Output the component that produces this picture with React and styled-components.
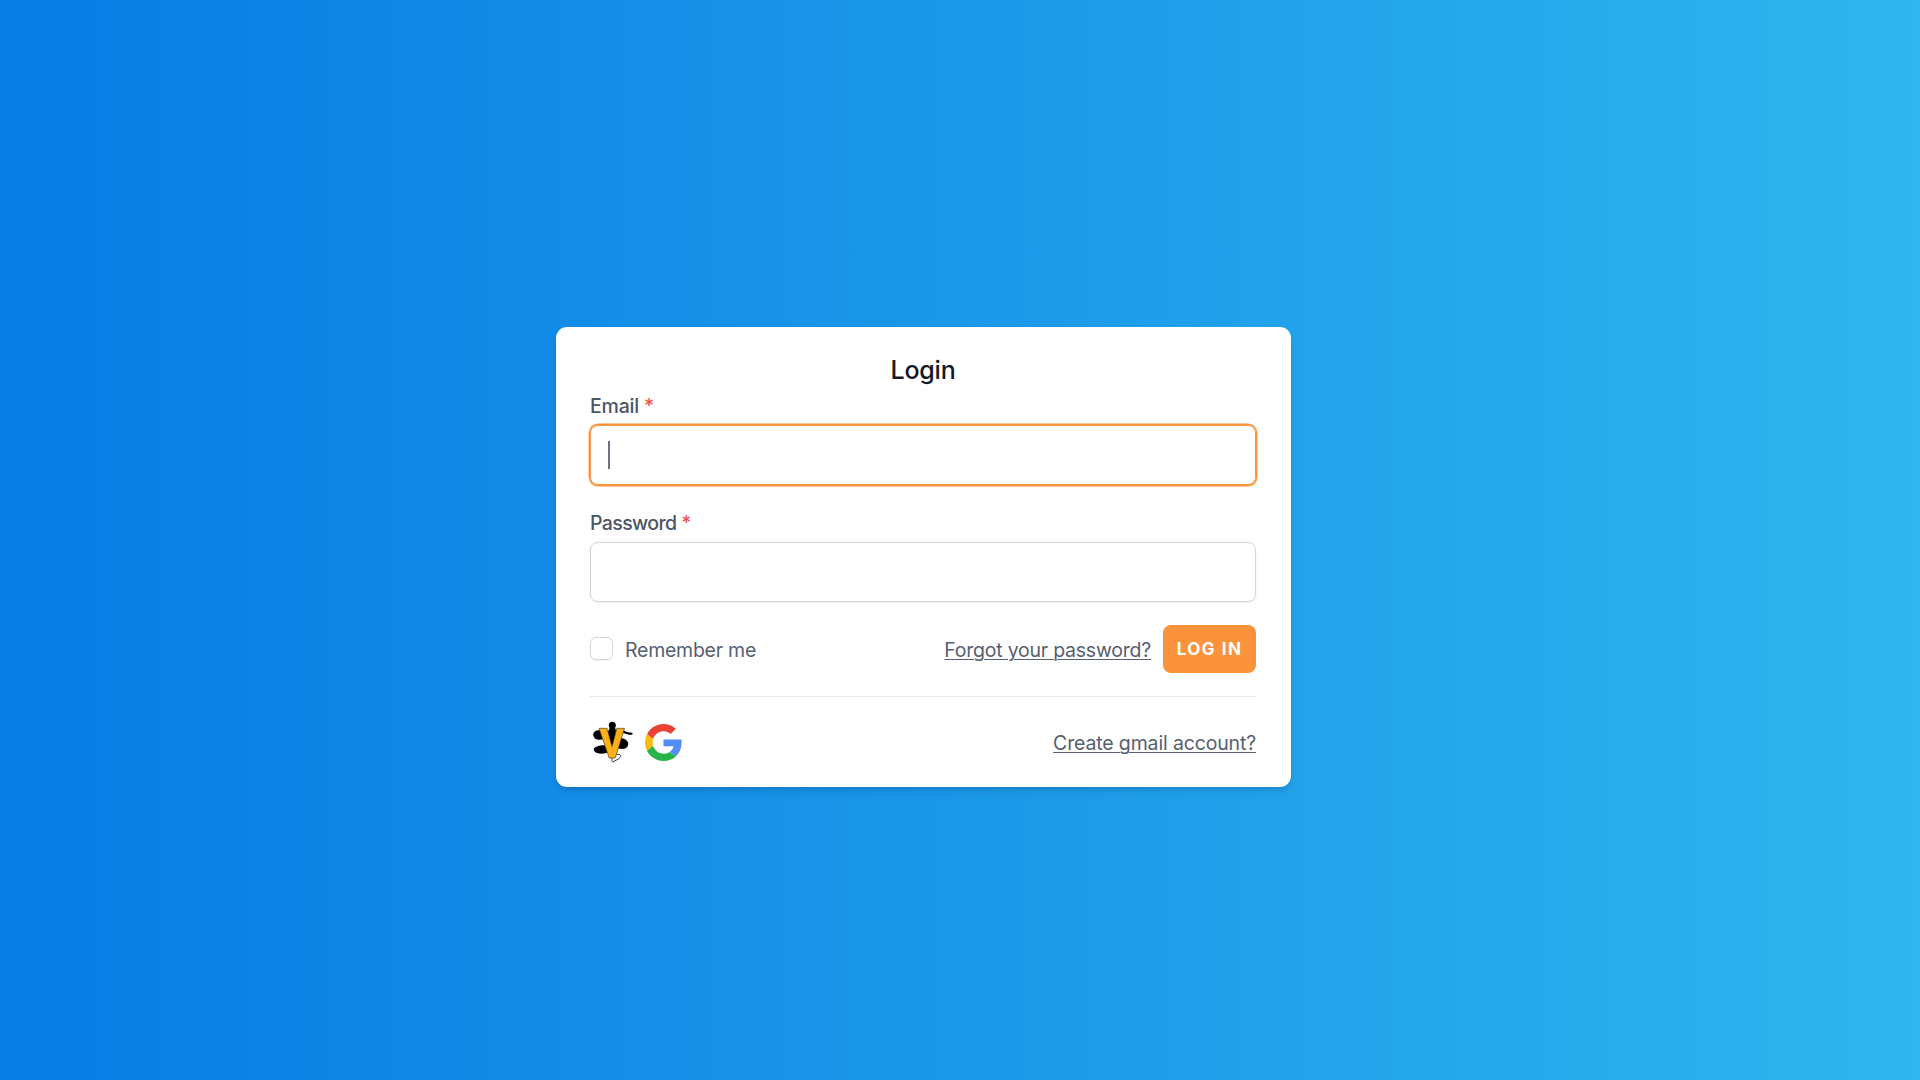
import React from "react";
import styled, { createGlobalStyle } from "styled-components";

const GlobalStyle = createGlobalStyle`
  *, *::before, *::after { box-sizing: border-box; }
  body {
    margin: 0;
    font-family: Inter, "Noto Sans", sans-serif;
    color: #4b5563;
  }
`;

const Page = styled.main`
  display: flex;
  flex-direction: column;
  align-items: center;
  height: 1080px;
  padding: 327.4px 74px 0 0;
  overflow: hidden;
  background: linear-gradient(90deg, #067ce4 0%, #1792e8 40%, #2eb6ee 100%);
`;

const Card = styled.form`
  width: 735px;
  height: 459.6px;
  padding: 27px 34.5px 0;
  border-radius: 11px;
  background: #fff;
  box-shadow: 0 5px 8px -1px rgba(0, 0, 0, 0.1), 0 3px 5px -2px rgba(0, 0, 0, 0.1);
`;

const Title = styled.h1`
  margin: 0;
  font-size: 25px;
  font-weight: 500;
  line-height: 32px;
  text-align: center;
  letter-spacing: -0.2px;
  color: #111827;
`;

const Field = styled.div`
  display: flex;
  flex-direction: column;
  margin-bottom: ${(p) => p.$gap}px;
`;

const Label = styled.label`
  height: 39px;
  padding-top: 1px;
  font-size: 19.5px;
  font-weight: 500;
  line-height: 38px;
  letter-spacing: ${(p) => p.$spacing}px;
  color: #4b5563;
`;

const Required = styled.span`
  color: #f05252;
`;

const Input = styled.div`
  display: flex;
  align-items: center;
  height: 60px;
  padding-left: 17px;
  border: 1px solid ${(p) => (p.$focused ? "#fb923c" : "#d1d5db")};
  border-radius: 8px;
  box-shadow: ${(p) => (p.$focused ? "0 0 0 1.4px #fb923c, " : "")}0 1px 2px rgba(0, 0, 0, 0.08);
`;

const Caret = styled.span`
  width: 2px;
  height: 28px;
  background: #6b7280;
`;

const Row = styled.div`
  display: flex;
  align-items: center;
  justify-content: space-between;
  height: ${(p) => p.$height}px;
`;

const Group = styled.div`
  display: flex;
  align-items: center;
  gap: ${(p) => p.$gap}px;
`;

const Checkbox = styled.span`
  width: 23px;
  height: 23px;
  border: 1px solid #d1d5db;
  border-radius: 6px;
  box-shadow: 0 1px 2px rgba(0, 0, 0, 0.06);
`;

const Text = styled.span`
  padding-top: 2px;
  font-size: 19.5px;
  line-height: 28px;
  letter-spacing: ${(p) => p.$spacing}px;
  color: #566070;
`;

const Link = styled(Text).attrs({ as: "a" })`
  text-decoration: underline;
  text-decoration-thickness: 1px;
  text-underline-offset: 2px;
`;

const Button = styled.button`
  width: 93px;
  height: 48px;
  padding: 0;
  border: 0;
  border-radius: 8px;
  background: #fb923c;
  font: 700 17px Inter, sans-serif;
  letter-spacing: 1.5px;
  color: #fff;
`;

const Divider = styled.hr`
  width: 100%;
  height: 1px;
  margin: 23.5px 0 18.9px;
  border: 0;
  background: #e5e7eb;
`;

function HornetLogo() {
  return (
    <svg width="44" height="44" viewBox="0 0 44 44" aria-hidden="true">
      <g fill="#000">
        <circle cx="22.3" cy="5.3" r="3.5" />
        <path d="M20 7h5l1 4-1.5 14h-5L18 12Z" />
        <path d="M13 11.5C8 8.5 2.5 11 3.3 15.5c.6 4.4 6 5.2 11.7 3l14-2 4-3.5 6 1.7c2 .5 4-.2 3.7-1.3-.4-1.2-3.2-.8-5-1.2L31 9.5Z" />
        <path d="M15 25.5c-4-1-7.3.2-10.5 2.3-1.6 1.2-.5 4.3 2.5 5.2 4.2 1.4 9 .3 12-1Z" />
        <path d="M30 18.3c3.4-.5 7 1.2 8 4.1.9 3-1.2 6-4.6 6.4-2.7.4-5-.2-7.4-1.3Z" />
      </g>
      <path d="M26.5 34.5c4-.7 5 1 3.5 3-1.6 2.1-4 2.4-7.3 4.7" fill="none" stroke="#333" strokeWidth="1" />
      <path d="M22 37v5" stroke="#555" strokeWidth="1" />
      <path d="M9 8.3h8L22 27l4.8-18.7h7.7L25.2 38h-6Z" fill="#fbb117" stroke="#5b4210" strokeWidth="0.7" />
    </svg>
  );
}

function GoogleLogo() {
  return (
    <svg width="37" height="37" viewBox="0 0 48 48" aria-hidden="true">
      <path fill="#EA4335" d="M24 9.5c3.54 0 6.71 1.22 9.21 3.6l6.85-6.85C35.9 2.38 30.47 0 24 0 14.62 0 6.51 5.38 2.56 13.22l7.98 6.19C12.43 13.72 17.74 9.5 24 9.5z" />
      <path fill="#518ef8" d="M47.5 20H24v9.02h12.94c-.58 2.96-2.26 5.48-4.78 7.18l7.73 6C44.4 38.02 47.5 31.84 47.5 24z" />
      <path fill="#FBBC05" d="M10.53 28.59A14.5 14.5 0 0 1 9.77 24c0-1.6.27-3.14.76-4.59l-7.98-6.19A23.99 23.99 0 0 0 0 24c0 3.88.92 7.54 2.56 10.78z" />
      <path fill="#28b446" d="M24 48c6.48 0 11.93-2.13 15.89-5.81l-7.73-6c-2.15 1.45-4.92 2.3-8.16 2.3-6.26 0-11.57-4.22-13.47-9.91l-7.98 6.19C6.51 42.62 14.62 48 24 48z" />
    </svg>
  );
}

export default function App() {
  return (
    <>
      <GlobalStyle />
      <Page>
        <Card>
          <Title>Login</Title>
          <Field $gap={18}>
            <Label $spacing={-0.2}>Email <Required>*</Required></Label>
            <Input $focused><Caret /></Input>
          </Field>
          <Field $gap={22.6}>
            <Label $spacing={-0.6}>Password <Required>*</Required></Label>
            <Input />
          </Field>
          <Row $height={48}>
            <Group $gap={12}>
              <Checkbox />
              <Text $spacing={-0.25}>Remember me</Text>
            </Group>
            <Group $gap={12}>
              <Link $spacing={-0.23}>Forgot your password?</Link>
              <Button type="button">LOG IN</Button>
            </Group>
          </Row>
          <Divider />
          <Row $height={52}>
            <Group $gap={11}>
              <HornetLogo />
              <GoogleLogo />
            </Group>
            <Link $spacing={-0.15}>Create gmail account?</Link>
          </Row>
        </Card>
      </Page>
    </>
  );
}
